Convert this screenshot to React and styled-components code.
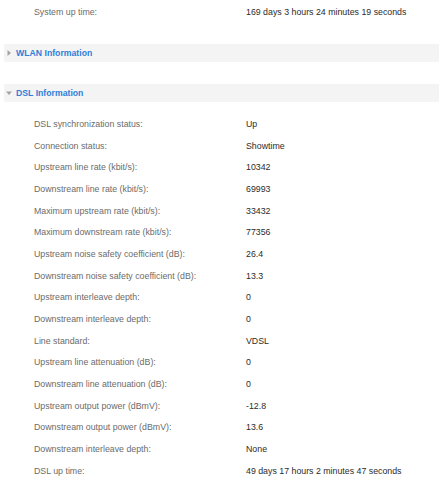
import React from "react";
import styled, { createGlobalStyle } from "styled-components";

const GlobalStyle = createGlobalStyle`
  html, body {
    margin: 0;
    padding: 0;
    background: #ffffff;
    font-family: "Liberation Sans", Arial, sans-serif;
  }
`;

const Page = styled.div`
  width: 439px;
  padding-top: 1px;
`;

const Table = styled.div`
  display: flex;
  flex-direction: column;
  padding-top: ${(props) => props.padTop || 0}px;
`;

const Row = styled.div`
  display: grid;
  grid-template-columns: 212px 1fr;
  height: 21.66px;
  flex-shrink: 0;
  align-items: center;
  padding-left: 34px;
  font-size: 8.8px;
`;

const Label = styled.div`
  color: #6b6b6b;
  white-space: nowrap;
`;

const Value = styled.div`
  color: #2b2b2b;
  white-space: nowrap;
`;

const SectionBar = styled.div`
  display: flex;
  align-items: center;
  gap: 4px;
  height: 18px;
  margin-left: 4px;
  margin-top: ${(props) => props.gapTop}px;
  padding-left: 2px;
  background: #f4f4f4;
  border-radius: 2px 0 0 2px;
`;

const Title = styled.span`
  color: #2f7ed8;
  font-weight: bold;
  font-size: 8.7px;
`;

const Arrow = ({ open }) => (
  <svg width="6" height="6" viewBox="0 0 6 6">
    {open ? (
      <polygon points="0,1.5 6,1.5 3,5" fill="#a3a3a3" />
    ) : (
      <polygon points="1.5,0 5,3 1.5,6" fill="#a3a3a3" />
    )}
  </svg>
);

const dsl = [
  ["DSL synchronization status:", "Up"],
  ["Connection status:", "Showtime"],
  ["Upstream line rate (kbit/s):", "10342"],
  ["Downstream line rate (kbit/s):", "69993"],
  ["Maximum upstream rate (kbit/s):", "33432"],
  ["Maximum downstream rate (kbit/s):", "77356"],
  ["Upstream noise safety coefficient (dB):", "26.4"],
  ["Downstream noise safety coefficient (dB):", "13.3"],
  ["Upstream interleave depth:", "0"],
  ["Downstream interleave depth:", "0"],
  ["Line standard:", "VDSL"],
  ["Upstream line attenuation (dB):", "0"],
  ["Downstream line attenuation (dB):", "0"],
  ["Upstream output power (dBmV):", "-12.8"],
  ["Downstream output power (dBmV):", "13.6"],
  ["Downstream interleave depth:", "None"],
  ["DSL up time:", "49 days 17 hours 2 minutes 47 seconds"],
];

export default function App() {
  return (
    <Page>
      <GlobalStyle />
      <Table>
        <Row>
          <Label>System up time:</Label>
          <Value>169 days 3 hours 24 minutes 19 seconds</Value>
        </Row>
      </Table>
      <SectionBar gapTop={21.4}>
        <Arrow />
        <Title>WLAN Information</Title>
      </SectionBar>
      <SectionBar gapTop={22}>
        <Arrow open />
        <Title>DSL Information</Title>
      </SectionBar>
      <Table padTop={11.2}>
        {dsl.map(([label, value], i) => (
          <Row key={i}>
            <Label>{label}</Label>
            <Value>{value}</Value>
          </Row>
        ))}
      </Table>
    </Page>
  );
}
